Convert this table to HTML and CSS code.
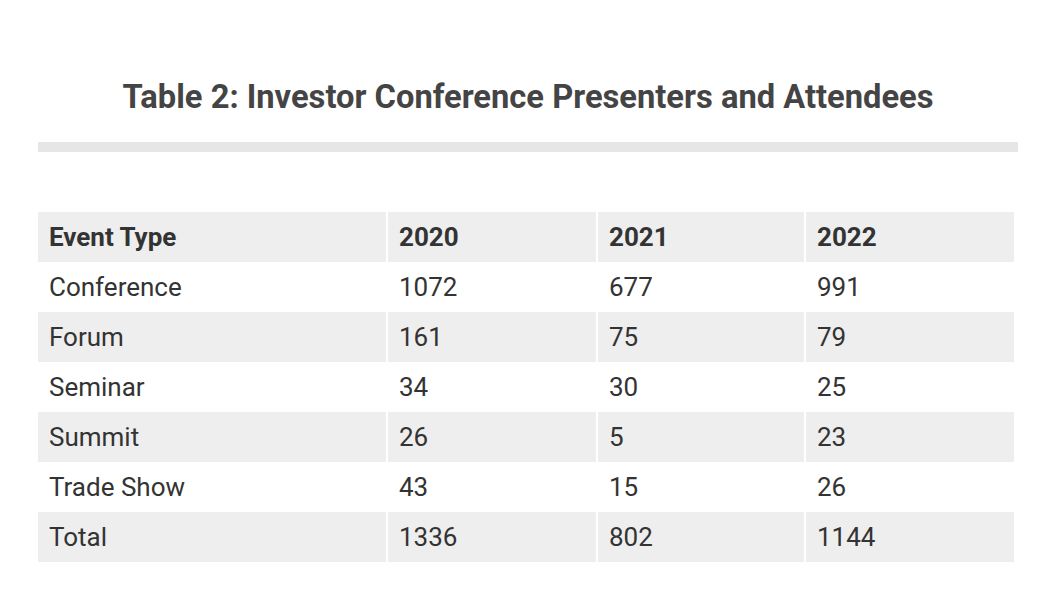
FILE: index.html
```html
<!DOCTYPE html>
<html>
<head>
<meta charset="utf-8">
<link rel="stylesheet" href="styles.css">
</head>
<body>
<div class="page">
  <h1 class="title">Table 2: Investor Conference Presenters and Attendees</h1>
  <div class="rule"></div>
  <table class="data">
    <colgroup>
      <col class="c1"><col class="c2"><col class="c3"><col class="c4">
    </colgroup>
    <thead>
      <tr class="shade"><th>Event Type</th><th>2020</th><th>2021</th><th>2022</th></tr>
    </thead>
    <tbody>
      <tr><td>Conference</td><td>1072</td><td>677</td><td>991</td></tr>
      <tr class="shade"><td>Forum</td><td>161</td><td>75</td><td>79</td></tr>
      <tr><td>Seminar</td><td>34</td><td>30</td><td>25</td></tr>
      <tr class="shade"><td>Summit</td><td>26</td><td>5</td><td>23</td></tr>
      <tr><td>Trade Show</td><td>43</td><td>15</td><td>26</td></tr>
      <tr class="shade"><td>Total</td><td>1336</td><td>802</td><td>1144</td></tr>
    </tbody>
  </table>
</div>
</body>
</html>
```
FILE: styles.css
```css
html, body {
  margin: 0;
  padding: 0;
  background: #ffffff;
}
body {
  font-family: Roboto, "Liberation Sans", Arial, sans-serif;
  color: #333333;
}
.page {
  padding: 78px 39px 0 38px;
}
.title {
  margin: 0;
  height: 38px;
  line-height: 38px;
  font-size: 32.7px;
  font-weight: 700;
  color: #444444;
  text-align: center;
}
.rule {
  margin-top: 26px;
  height: 10px;
  background: #e6e6e6;
}
.data {
  margin-top: 60px;
  width: 976px;
  table-layout: fixed;
  border-collapse: separate;
  border-spacing: 2px 0;
  margin-left: -2px;
  box-sizing: content-box;
}
.c1 { width: 348px; }
.c2 { width: 208px; }
.c3 { width: 206px; }
.c4 { width: 208px; }
.data th, .data td {
  height: 50px;
  padding: 0 10px 0 11px;
  text-align: left;
  font-size: 26px;
  color: #333333;
  vertical-align: middle;
  box-sizing: border-box;
}
.data th {
  font-weight: 700;
}
.data td {
  font-weight: 400;
}
.shade th, .shade td {
  background: #eeeeee;
}
```
